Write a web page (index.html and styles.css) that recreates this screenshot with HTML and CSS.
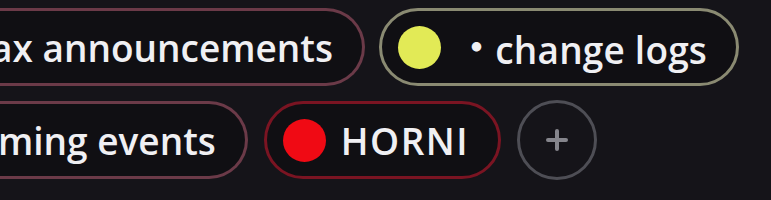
FILE: index.html
```html
<!DOCTYPE html>
<html>
<head>
<meta charset="utf-8">
<link rel="stylesheet" href="styles.css">
</head>
<body>
<div class="roles">
  <div class="row row-top">
    <div class="pill pill-cut pill-cut-a pill-pink"><span class="name">ax announcements</span></div>
    <div class="pill pill-khaki"><span class="dot dot-yellow"></span><span class="name name-sep"><span class="sep">・</span>change logs</span></div>
  </div>
  <div class="row">
    <div class="pill pill-cut pill-cut-b pill-pink"><span class="name">ming events</span></div>
    <div class="pill pill-red"><span class="dot dot-red"></span><span class="name name-caps">HORNI</span></div>
    <button class="add" aria-label="Add role">
      <svg width="26" height="26" viewBox="0 0 26 26"><path d="M13 4v18M4 13h18" stroke="#85858c" stroke-width="4" stroke-linecap="round"/></svg>
    </button>
  </div>
</div>
</body>
</html>
```
FILE: styles.css
```css
html, body {
  margin: 0;
  padding: 0;
  background: #151419;
  width: 771px;
  height: 200px;
  overflow: hidden;
}
.roles {
  display: flex;
  flex-direction: column;
  gap: 14px;
  padding-top: 8px;
}
.row {
  display: flex;
  align-items: center;
  gap: 16px;
}
.row-top { gap: 14px; }
.pill {
  box-sizing: border-box;
  height: 78px;
  border: 3px solid #6b3a48;
  border-radius: 39px;
  background: #100f13;
  display: flex;
  align-items: center;
  padding: 0 29px 0 16px;
  gap: 15px;
}
.pill-cut {
  border-left: none;
  border-top-left-radius: 0;
  border-bottom-left-radius: 0;
  padding-left: 0;
}
.pill-cut-a { margin-left: -9px; }
.pill-cut-b { margin-left: -2px; }
.pill-pink { border-color: #6b3a48; }
.pill-khaki { border-color: #8a8a72; gap: 17px; }
.pill-red { border-color: #7a1422; }
.name {
  font-family: "Open Sans", "Noto Sans CJK JP", sans-serif;
  font-weight: 600;
  font-size: 37px;
  color: #f0f0f3;
  line-height: 1;
  white-space: nowrap;
}
.name-sep { letter-spacing: 0.2px; }
.name-caps { letter-spacing: 1.5px; }
.sep {
  font-family: "Noto Sans CJK JP", sans-serif;
  font-size: 37px;
  vertical-align: 3px;
}
.dot {
  width: 43px;
  height: 43px;
  border-radius: 50%;
  flex: none;
}
.dot-yellow { background: #e2ea56; }
.dot-red { background: #f00a14; }
.add {
  box-sizing: border-box;
  width: 80px;
  height: 80px;
  border-radius: 50%;
  border: 3px solid #4e4e55;
  background: transparent;
  display: flex;
  align-items: center;
  justify-content: center;
  padding: 0;
}
```
